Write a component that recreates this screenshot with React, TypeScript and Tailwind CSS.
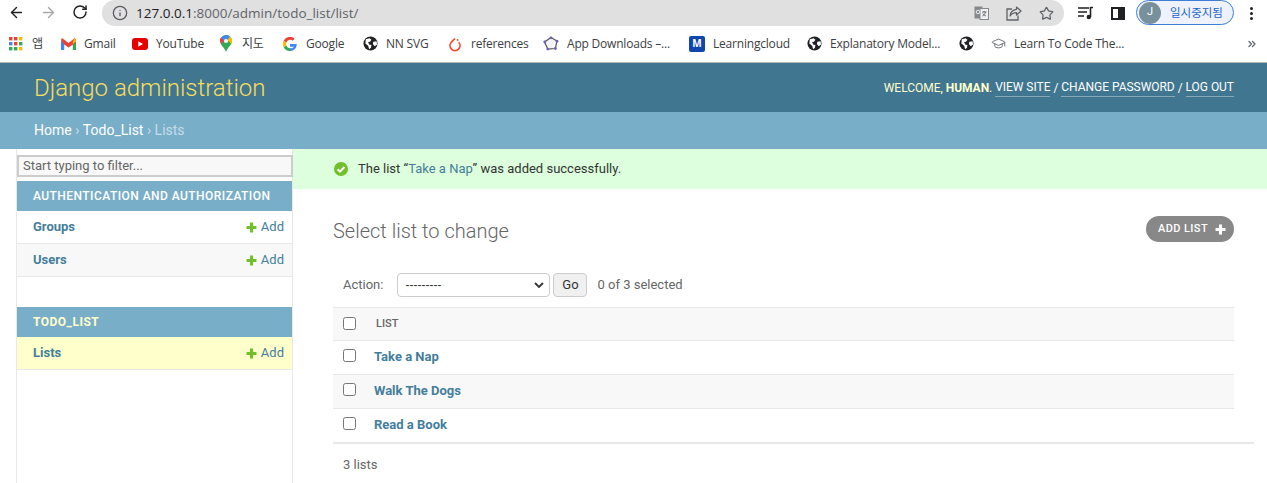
import React from "react";
import { ArrowLeft, ArrowRight, RotateCw, Info, Star, ChevronsRight, GraduationCap } from "lucide-react";

const Globe = () => (
  <svg width="15" height="15" viewBox="0 0 16 16">
    <circle cx="8" cy="8" r="7.5" fill="#202124" />
    <path d="M3 3.5 L7 2.5 L9 4 L7.5 6 L5.5 6.5 L6.5 9 L9 9.5 L8.5 12.5 L6.5 14 L5.5 10.5 L2.5 8 Z M11 6 L14.5 5.5 L15 9 L12.5 11 L10.5 8.5 Z" fill="#fff" />
  </svg>
);

const Mark = ({ icon, label, w }: { icon: React.ReactNode; label: string; w: string }) => (
  <div className={`flex items-center shrink-0 ${w}`}>
    <span className="w-[16px] h-[16px] flex items-center justify-center shrink-0">{icon}</span>
    <span className="ml-[8px] text-[12px] tracking-[-0.2px] text-[#3c4043] whitespace-nowrap">{label}</span>
  </div>
);

const Plus = ({ color = "#70bf2b", size = 11 }: { color?: string; size?: number }) => (
  <svg width={size} height={size} viewBox="0 0 10 10" className="block">
    <path d="M3.6 0.5h2.8v3.1h3.1v2.8h-3.1v3.1h-2.8v-3.1h-3.1v-2.8h3.1z" fill={color} />
  </svg>
);

const SideRow = ({ name, cls }: { name: string; cls: string }) => (
  <div className={`h-[33px] flex items-center justify-between pl-[16px] pr-[8px] border-b border-[#e8e8e8] ${cls}`}>
    <span className="font-bold text-[#447e9b] text-[13px]">{name}</span>
    <span className="flex items-center gap-[4px] text-[13px] text-[#447e9b]">
      <Plus />
      Add
    </span>
  </div>
);

const Check = () => <span className="block w-[13px] h-[13px] border border-[#767676] rounded-[2.5px] bg-white -translate-y-[1px]" />;

const Row = ({ name, cls, h = "h-[34px]" }: { name: string; cls: string; h?: string }) => (
  <div className={`${h} flex items-center border-b border-[#e8e8e8] pl-[10px] pb-[2px] ${cls}`}>
    <Check />
    <span className="ml-[18px] font-bold text-[13px] text-[#447e9b]">{name}</span>
  </div>
);

export default function App() {
  return (
    <div className="w-[1267px] h-[483px] overflow-hidden bg-white font-['Roboto',sans-serif] flex flex-col">
      {/* browser toolbar */}
      <div className="h-[26px] flex items-center shrink-0">
        <div className="w-[102px] flex items-center pl-[8px] pb-[2px] gap-[15px] text-[#202124]">
          <ArrowLeft size={17} strokeWidth={2} />
          <ArrowRight size={17} strokeWidth={2} className="text-[#a8a9ab]" />
          <RotateCw size={16} strokeWidth={2.2} />
        </div>
        <div className="w-[962px] h-[26px] bg-[#e0e0e0] rounded-[13px] flex items-center pl-[10px] pr-[10px] font-['Open_Sans',sans-serif]">
          <Info size={16} className="text-[#5a5c60]" />
          <span className="ml-[8px] text-[13.5px] text-[#5f6368]">
            <span className="text-[#202124]">127.0.0.1</span>:8000/admin/todo_list/list/
          </span>
          <div className="ml-auto flex items-center text-[#5f6368]">
            <svg width="15" height="14" viewBox="0 0 15 14">
              <rect x="0.5" y="0.5" width="8" height="12" fill="#85888c" />
              <rect x="6" y="2.5" width="8.5" height="11" fill="#f0f0f0" stroke="#85888c" />
              <path d="M8 6h4.5M10.2 5v1M11.6 6c-.6 2-1.8 3.4-3.2 4M8.8 7.6c.7 1 1.8 2 3.2 2.5" fill="none" stroke="#5f6368" strokeWidth="0.9" />
              <circle cx="4" cy="6" r="1.8" fill="none" stroke="#f0f0f0" strokeWidth="1" />
            </svg>
            <svg width="16" height="15" viewBox="0 0 16 15" className="ml-[17px]">
              <path d="M6 3H1v11h11V9.5" fill="none" stroke="currentColor" strokeWidth="1.3" />
              <path d="M10.5 1l4.5 4-4.5 4V6.6C7.5 6.6 5.5 7.6 4 10c.3-3.500 2.500-6.200 6.500-6.700z" fill="none" stroke="currentColor" strokeWidth="1.2" strokeLinejoin="round" />
            </svg>
            <Star size={15} strokeWidth={2} className="ml-[17px]" />
          </div>
        </div>
        <div className="flex items-center flex-1">
          <svg width="16" height="14" viewBox="0 0 16 14" className="ml-[14px]">
            <path d="M0 2h11M0 6h9M0 10h6" stroke="#202124" strokeWidth="1.6" />
            <path d="M12.5 1.5h2.5M12.5 1v10" stroke="#202124" strokeWidth="1.6" />
            <circle cx="10.8" cy="11" r="2.2" fill="#202124" />
          </svg>
          <span className="ml-[17px] w-[14px] h-[13px] border-2 border-[#202124] flex justify-end">
            <span className="w-[5px] h-full bg-[#202124]" />
          </span>
          <div className="ml-[11px] w-[98px] h-[25px] rounded-full border border-[#3f7ed8] bg-[#edf2fc] flex items-center pl-[2px] -mt-[1px]">
            <span className="w-[22px] h-[22px] rounded-full bg-[#78909c] text-white text-[11px] flex items-center justify-center">J</span>
            <span className="ml-[9px] text-[11.5px] text-[#1a63c9] font-['Noto_Sans_CJK_KR',sans-serif] whitespace-nowrap">일시중지됨</span>
          </div>
          <span className="ml-[16px] flex flex-col gap-[2px]">
            <span className="w-[3px] h-[3px] rounded-full bg-[#202124]" />
            <span className="w-[3px] h-[3px] rounded-full bg-[#202124]" />
            <span className="w-[3px] h-[3px] rounded-full bg-[#202124]" />
          </span>
        </div>
      </div>
      {/* bookmarks */}
      <div className="h-[37px] shrink-0 flex items-center pl-[8px] pb-[1px] border-b border-[#b8b8b8] font-['Open_Sans','Noto_Sans_CJK_KR',sans-serif]">
        <Mark
          w="w-[52px]"
          label="앱"
          icon={
            <svg width="14" height="14" viewBox="0 0 14 14">
              {[
                [0, 0, "#ea4335"], [5, 0, "#ea4335"], [10, 0, "#fbbc05"],
                [0, 5, "#4285f4"], [5, 5, "#ea4335"], [10, 5, "#34a853"],
                [0, 10, "#34a853"], [5, 10, "#34a853"], [10, 10, "#fbbc05"],
              ].map(([x, y, c], i) => (
                <rect key={i} x={x as number} y={y as number} width="3.4" height="3.4" fill={c as string} />
              ))}
            </svg>
          }
        />
        <Mark
          w="w-[72px]"
          label="Gmail"
          icon={
            <svg width="15" height="12" viewBox="0 0 15 12">
              <path d="M0 2v10h3.2V5z" fill="#4285f4" />
              <path d="M15 2v10h-3.2V5z" fill="#34a853" />
              <path d="M0 2l1-2 6.5 5L14 0l1 2-1 3.2-6.5 4.3L3.2 6.5z" fill="#ea4335" />
              <path d="M11.8 3.6L14 0l1 2v1.5l-3.2 2.4z" fill="#fbbc05" />
            </svg>
          }
        />
        <Mark
          w="w-[86px]"
          label="YouTube"
          icon={
            <svg width="16" height="12" viewBox="0 0 16 12">
              <rect width="16" height="12" rx="3" fill="#e60000" />
              <path d="M6.3 3.3v5.4L11 6z" fill="#fff" />
            </svg>
          }
        />
        <Mark
          w="w-[64px]"
          label="지도"
          icon={
            <svg width="12" height="17" viewBox="0 0 12 17">
              <path d="M6 17C5 13 0 10 0 6a6 6 0 0 1 12 0c0 4-5 7-6 11z" fill="#34a853" />
              <path d="M1 2.5L6 0a6 6 0 0 1 3.8 1.4L3 8z" fill="#4285f4" />
              <path d="M0 6a6 6 0 0 1 1-3.5L4 5.5 1.5 9z" fill="#ea4335" />
              <path d="M9.8 1.4A6 6 0 0 1 12 6c0 1-.3 2-.8 3L7.5 5z" fill="#fbbc05" />
              <circle cx="6" cy="6" r="2.1" fill="#fff" />
            </svg>
          }
        />
        <Mark
          w="w-[80px]"
          label="Google"
          icon={
            <svg width="14" height="14" viewBox="0 0 14 14">
              <path d="M13.7 7.1H7v2.7h3.9A4 4 0 0 1 7 11.2V14c3.9 0 6.9-2.9 6.7-6.9z" fill="#4285f4" />
              <path d="M3 7c0-.5.1-1 .3-1.5L.8 3.4A7 7 0 0 0 .8 10.6l2.5-2.1C3.1 8 3 7.5 3 7z" fill="#fbbc05" />
              <path d="M7 2.8c1 0 1.9.4 2.6 1l2.1-2.1A7 7 0 0 0 .8 3.4l2.5 2.1A4 4 0 0 1 7 2.8z" fill="#ea4335" />
              <path d="M3.3 8.5L.8 10.6A7 7 0 0 0 7 14v-2.8a4 4 0 0 1-3.7-2.7z" fill="#34a853" />
            </svg>
          }
        />
        <Mark w="w-[85px]" label="NN SVG" icon={<Globe />} />
        <Mark
          w="w-[96px]"
          label="references"
          icon={
            <svg width="14" height="16" viewBox="0 0 14 16">
              <path d="M7 2.5L3.3 6.2a5 5 0 1 0 7.4 0" fill="none" stroke="#ee4c2c" strokeWidth="1.7" />
              <circle cx="9.6" cy="4" r="0.9" fill="#ee4c2c" />
            </svg>
          }
        />
        <Mark
          w="w-[146px]"
          label="App Downloads –..."
          icon={
            <svg width="16" height="16" viewBox="0 0 16 16">
              <path d="M8 1.5l6 3.6-1.6 7.4-7.6.6L1.500 6z" fill="#f4f4f8" stroke="#555" strokeWidth="1.2" />
              <g fill="#6a63b6">
                <circle cx="8" cy="1.8" r="1.4" />
                <circle cx="14" cy="5.2" r="1.4" />
                <circle cx="12.4" cy="12.5" r="1.4" />
                <circle cx="4.8" cy="13.1" r="1.4" />
                <circle cx="1.8" cy="6" r="1.4" />
              </g>
            </svg>
          }
        />
        <Mark
          w="w-[117px]"
          label="Learningcloud"
          icon={
            <span className="w-[16px] h-[16px] bg-[#0f47ae] rounded-[2px] text-white text-[10px] font-bold flex items-center justify-center">M</span>
          }
        />
        <Mark w="w-[152px]" label="Explanatory Model..." icon={<Globe />} />
        <div className="w-[32px] flex shrink-0"><span className="w-[16px] flex justify-center"><Globe /></span></div>
        <Mark w="w-[256px]" label="Learn To Code The..." icon={<GraduationCap size={15} strokeWidth={1.4} className="text-[#5f6368]" />} />
        <ChevronsRight size={12} strokeWidth={2.5} className="text-[#5f6368] shrink-0" />
      </div>
      {/* Django header */}
      <div className="h-[49px] shrink-0 bg-[#417690] flex items-center justify-between pl-[34px] pr-[33px]">
        <span className="text-[24px] font-light text-[#f5dd5d] leading-none">Django administration</span>
        <div className="text-[12px] text-[#ffc] font-normal tracking-[-0.03px] flex items-center whitespace-nowrap">
          <span>WELCOME,&nbsp;</span>
          <b className="font-bold">HUMAN</b>
          <span>.&nbsp;</span>
          <span className="text-white border-b border-[#ffffff60]">VIEW SITE</span>
          <span className="text-white">&nbsp;/&nbsp;</span>
          <span className="text-white border-b border-[#ffffff60]">CHANGE PASSWORD</span>
          <span className="text-white">&nbsp;/&nbsp;</span>
          <span className="text-white border-b border-[#ffffff60]">LOG OUT</span>
        </div>
      </div>
      {/* breadcrumbs */}
      <div className="h-[37px] shrink-0 bg-[#79aec8] flex items-center pl-[34px] text-[14px] text-[#c4dce8] whitespace-nowrap">
        <span className="text-white">Home</span>
        <span>&nbsp;›&nbsp;</span>
        <span className="text-white">Todo_List</span>
        <span>&nbsp;›&nbsp;Lists</span>
      </div>
      {/* body */}
      <div className="flex flex-1 min-h-0">
        <div className="w-[277px] ml-[16px] shrink-0 border-l border-r border-[#e8e8e8] pt-[6px]">
          <div className="h-[22px] border-2 border-[#cccccc] bg-[#f8f8f8] flex items-center pl-[4px] text-[13px] text-[#666] -mr-[1px]">Start typing to filter...</div>
          <div className="h-[30px] mt-[4px] bg-[#79aec8] flex items-center pl-[16px] text-[12px] font-medium tracking-[0.45px] text-white">AUTHENTICATION AND AUTHORIZATION</div>
          <SideRow name="Groups" cls="bg-white" />
          <SideRow name="Users" cls="bg-[#f8f8f8]" />
          <div className="h-[30px]" />
          <div className="h-[30px] bg-[#79aec8] flex items-center pl-[16px] text-[12px] font-bold tracking-[0.5px] text-[#ffffcc]">TODO_LIST</div>
          <SideRow name="Lists" cls="bg-[#ffffcc]" />
        </div>
        <div className="flex-1 min-w-0">
          <div className="h-[40px] bg-[#dfd] flex items-center pl-[41px] pb-[1px] text-[13px] text-[#333]">
            <svg width="14" height="14" viewBox="0 0 14 14">
              <circle cx="7" cy="7" r="7" fill="#70bf2b" />
              <path d="M3.6 7.2l2.4 2.4 4.4-4.6" fill="none" stroke="#fff" strokeWidth="2" />
            </svg>
            <span className="ml-[10px]">
              The list “<span className="text-[#447e9b]">Take a Nap</span>” was added successfully.
            </span>
          </div>
          <div className="pl-[40px] pr-[33px]">
            <div className="flex items-center justify-between pt-[8px] h-[76px]">
              <span className="text-[20px] font-light text-[#666] leading-[30px]">Select list to change</span>
              <span className="h-[26px] w-[88px] mb-[4px] rounded-full bg-[#888] text-white flex items-center pl-[12px] text-[11px] font-medium tracking-[0.4px] whitespace-nowrap">
                ADD LIST
                <span className="ml-[7px]"><Plus color="#fff" size={11} /></span>
              </span>
            </div>
            <div className="flex items-center h-[40px] text-[13px] text-[#666]">
              <span className="ml-[10px]">Action:</span>
              <span className="ml-[14px] w-[153px] h-[24px] border border-[#cccccc] rounded-[4px] bg-white flex items-center justify-between pl-[7px] pr-[5px] text-[12px] text-[#333] font-['Liberation_Sans',sans-serif]">
                ---------
                <svg width="10" height="6" viewBox="0 0 10 6"><path d="M1 1l4 4 4-4" fill="none" stroke="#333" strokeWidth="1.8" /></svg>
              </span>
              <span className="ml-[3px] w-[34px] h-[24px] border border-[#cccccc] rounded-[4px] bg-[#f0f0f0] flex items-center justify-center text-[#333]">Go</span>
              <span className="ml-[10px]">0 of 3 selected</span>
            </div>
            <div className="mt-[2px] h-[34px] bg-[#f8f8f8] border-t border-b border-[#e8e8e8] flex items-center pl-[10px]">
              <Check />
              <span className="ml-[20px] text-[11px] font-medium text-[#666]">LIST</span>
            </div>
            <Row name="Take a Nap" cls="bg-white" />
            <Row name="Walk The Dogs" cls="bg-[#f8f8f8]" />
            <Row name="Read a Book" cls="bg-white border-b-0" h="h-[33px]" />
            <div className="border-t-2 border-[#e8e8e8] h-[40px] flex items-center pl-[10px] pt-[3px] text-[13px] text-[#666] mr-[-20px]">3 lists</div>
          </div>
        </div>
      </div>
    </div>
  );
}
